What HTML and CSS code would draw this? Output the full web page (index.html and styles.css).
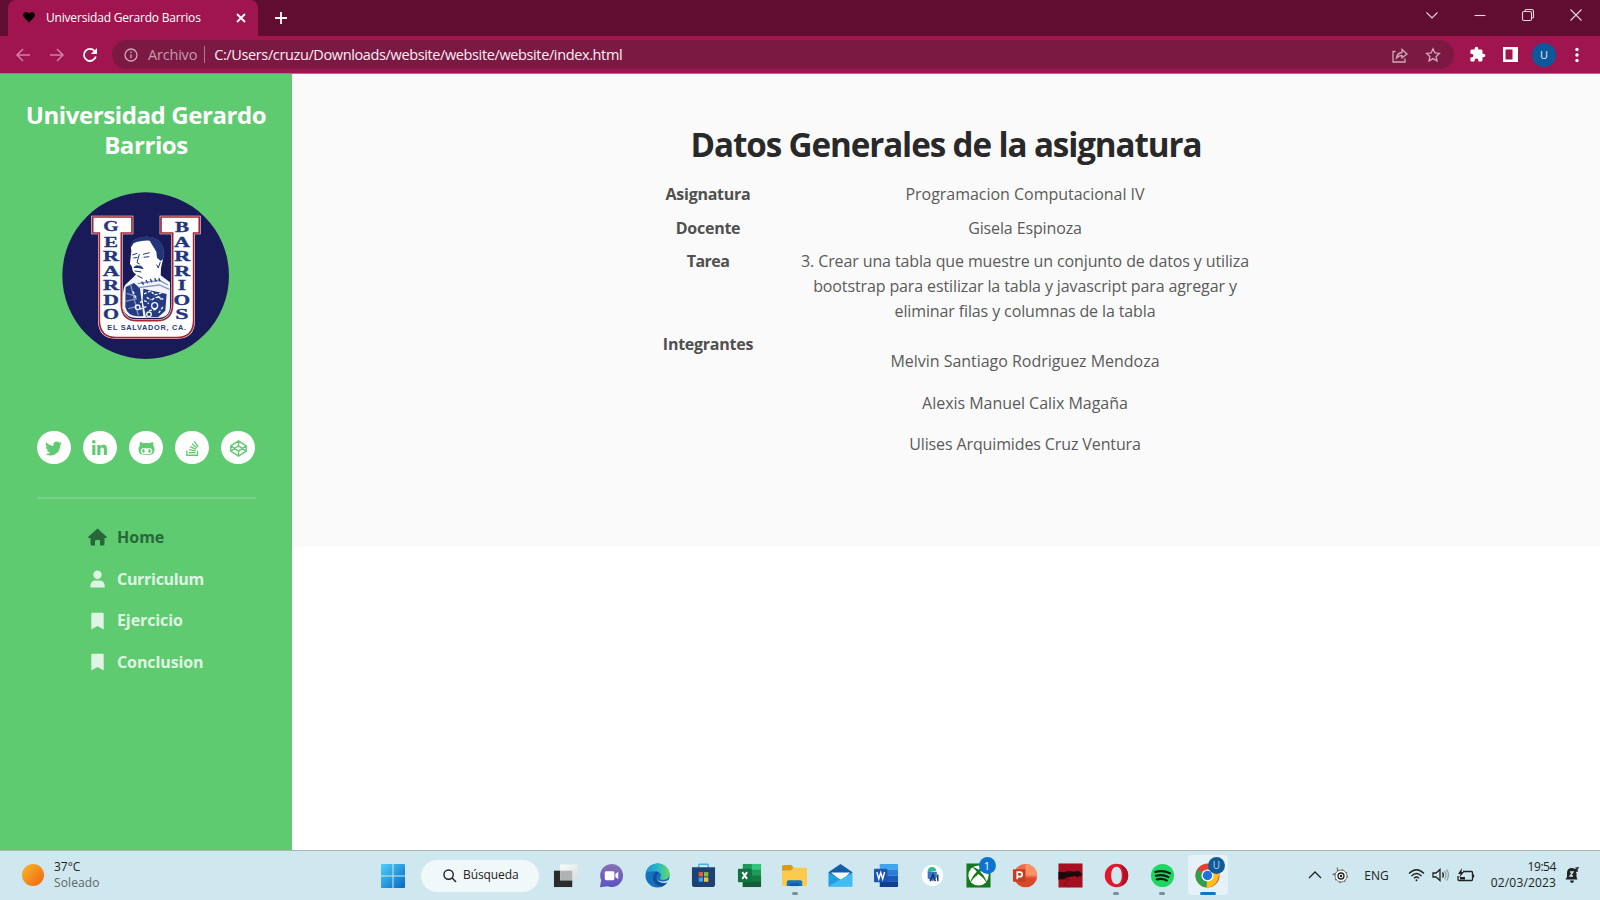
FILE: index.html
```html
<!DOCTYPE html>
<html lang="es">
<head>
<meta charset="utf-8">
<title>Universidad Gerardo Barrios</title>
<link rel="stylesheet" href="styles.css">
</head>
<body>
<div class="screen">
  <header class="browser">
    <div class="tabstrip">
      <div class="tab">
        <svg class="heart" viewBox="0 0 12 12"><path d="M6 11.600 1 6.200C-.6 4.200.4.9 3 .9c1.400 0 2.400.7 3 1.900C6.600 1.600 7.600.9 9 .9c2.600 0 3.600 3.300 2 5.300z"/></svg>
        <span class="tab-title">Universidad Gerardo Barrios</span>
        <svg class="tab-x" viewBox="0 0 10 10"><path d="M1 1l8 8M9 1l-8 8"/></svg>
      </div>
      <svg class="newtab" viewBox="0 0 14 14"><path d="M7 1v12M1 7h12"/></svg>
      <div class="winbtns">
        <svg viewBox="0 0 14 14"><path d="M1.500 4.500 7 10l5.500-5.500"/></svg>
        <svg viewBox="0 0 14 14"><path d="M1.500 7.500h11"/></svg>
        <svg viewBox="0 0 14 14"><rect x="1.500" y="3.500" width="9" height="9" rx="1.500"/><path d="M4 3.500V2.800Q4 1.500 5.300 1.500H10.500Q12.500 1.500 12.500 3.500V8.700Q12.500 10 11 10"/></svg>
        <svg viewBox="0 0 14 14"><path d="M1.500 1.500l11 11M12.500 1.500l-11 11"/></svg>
      </div>
    </div>
    <div class="toolbar">
      <svg class="nav-ic dim" viewBox="0 0 16 16"><path d="M15 8H2M8 2 2 8l6 6"/></svg>
      <svg class="nav-ic dim" viewBox="0 0 16 16"><path d="M1 8h13M8 2l6 6-6 6"/></svg>
      <svg class="nav-ic reload" viewBox="0 0 16 16"><path d="M13.800 9.500A6 6 0 1 1 12.500 4"/><path class="fill" d="M15 1v6H9z"/></svg>
      <div class="omnibox">
        <svg class="info" viewBox="0 0 14 14"><circle cx="7" cy="7" r="6"/><path d="M7 6.300v4M7 3.500v1.500"/></svg>
        <span class="scheme">Archivo</span>
        <i class="bar"></i>
        <span class="url">C:/Users/cruzu/Downloads/website/website/website/index.html</span>
        <svg class="share" viewBox="0 0 16 16"><path d="M3.500 4.500H1V15h12v-3.500M4.500 11Q5 6 10 5.500V2.500L15 7l-5 4V8.500Q6.500 8.500 4.500 11z"/></svg>
        <svg class="star" viewBox="0 0 16 16"><path d="M8 1.800l1.900 4.100 4.500.5-3.300 3 .9 4.500L8 11.600l-4 2.300.9-4.500-3.300-3 4.500-.5z"/></svg>
      </div>
      <svg class="puzzle" viewBox="0 0 24 24"><path d="M20.500 11H19V7a2 2 0 0 0-2-2h-4V3.500a2.500 2.500 0 0 0-5 0V5H4a2 2 0 0 0-2 2v3.800h1.500a2.700 2.700 0 0 1 0 5.400H2V20c0 1.100.9 2 2 2h3.800v-1.500a2.700 2.700 0 0 1 5.400 0V22H17a2 2 0 0 0 2-2v-4h1.500a2.500 2.500 0 0 0 0-5z"/></svg>
      <svg class="panel" viewBox="0 0 15 15"><path d="M0 0h15v15H0zM2.500 2.500v10h7v-10z" fill-rule="evenodd"/></svg>
      <span class="avatar">U</span>
      <svg class="dots" viewBox="0 0 4 16"><circle cx="2" cy="2.500" r="1.700"/><circle cx="2" cy="8" r="1.700"/><circle cx="2" cy="13.500" r="1.700"/></svg>
    </div>
  </header>

  <div class="page">
    <aside class="sidebar">
      <h1 class="brand"><span>Universidad Gerardo</span><span>Barrios</span></h1>
      <svg class="crest" viewBox="36 35 502 502">
        <circle cx="287" cy="286" r="250" fill="#191b59"/>
        <path d="M124 106H250V162H218V370Q218 417 262 417H320Q364 417 364 370V162H329V106H452V162H435V420Q435 476 380 476H200Q144 476 144 420V162H124Z" fill="#fff"/>
        <path d="M128 110H246V158H214V370Q214 421 262 421H320Q368 421 368 370V158H333V110H448V158H431V420Q431 472 380 472H200Q148 472 148 420V158H128Z" fill="#fff" stroke="#a4242f" stroke-width="5"/>
        <g class="portrait">
          <path d="M219 386Q216 325 226 313L250 291 264 275 332 285 360 306V380Q358 413 322 413H262Q228 413 219 386Z" fill="#f3f5fb"/>
          <path d="M244 211Q239 188 257 177Q285 163 318 175Q346 190 340 233L333 263 332 290Q300 309 264 300L260 282Q247 279 246 260L240 250Z" fill="#fff"/>
          <path d="M240 205Q240 183 262 173Q290 163 319 174Q346 190 341 235L332 242 321 232 319 214 310 199 299 181Q270 180 251 189Z" fill="#223579"/>
          <path d="M247 224l15-5M279 222l20-5M250 233l12-2M281 231l17-2M268 222l-7 25 8 4M254 272l20 3M262 286l16 8M331 245l-6 18-5-10" fill="none" stroke="#223579" stroke-width="3"/>
          <path d="M250 263Q257 251 266 256 276 255 281 267L265 263Z" fill="#223579"/>
          <path d="M227 320l25-12 18 16 10 84h-18Q232 406 226 380ZM280 325l70 16-4 50-22 20h-36l-10-50Z" fill="#243b83"/>
          <path d="M263 310l65-10 26 14M266 322l62-8 30 13M242 313l23 92M230 339l30 10M226 363l35-8M235 385l25-6" fill="none" stroke="#8796c2" stroke-width="4"/>
          <path d="M275 304l6 9M288 299l5 10M301 296l5 10M314 294l5 10M327 294l3 9" stroke="#243b83" stroke-width="4"/>
          <g fill="none" stroke="#f3f5fb" stroke-width="4"><path d="M282 341l20-9 12 12 21-6M270 367q17-12 26 4M306 359q14-15 28-1M269 387l20-8M297 391l22-4M326 398l15-21M249 333l8 20M290 351l14 8M323 348l17 9" stroke-dasharray="9 4"/><circle cx="314" cy="376" r="9"/><circle cx="263" cy="381" r="7"/><circle cx="297" cy="402" r="7"/></g>
        </g>
        <g class="crest-letters">
          <text x="183" y="153" textLength="46" lengthAdjust="spacingAndGlyphs">G</text><text x="183" y="200" textLength="42" lengthAdjust="spacingAndGlyphs">E</text><text x="183" y="243" textLength="48" lengthAdjust="spacingAndGlyphs">R</text><text x="183" y="287" textLength="50" lengthAdjust="spacingAndGlyphs">A</text><text x="183" y="330" textLength="48" lengthAdjust="spacingAndGlyphs">R</text><text x="183" y="373" textLength="47" lengthAdjust="spacingAndGlyphs">D</text><text x="183" y="416" textLength="48" lengthAdjust="spacingAndGlyphs">O</text>
          <text x="396" y="155" textLength="42" lengthAdjust="spacingAndGlyphs">B</text><text x="396" y="199" textLength="48" lengthAdjust="spacingAndGlyphs">A</text><text x="397" y="243" textLength="48" lengthAdjust="spacingAndGlyphs">R</text><text x="397" y="287" textLength="48" lengthAdjust="spacingAndGlyphs">R</text><text x="396" y="330" textLength="25" lengthAdjust="spacingAndGlyphs">I</text><text x="396" y="373" textLength="50" lengthAdjust="spacingAndGlyphs">O</text><text x="396" y="415" textLength="40" lengthAdjust="spacingAndGlyphs">S</text>
        </g>
        <text class="crest-place" x="290" y="450" textLength="236">EL SALVADOR, CA.</text>
      </svg>
      <ul class="social">
        <li><svg viewBox="0 0 512 512"><path d="M459.370 151.716c.325 4.548.325 9.097.325 13.645 0 138.720-105.583 298.558-298.558 298.558-59.452 0-114.680-17.219-161.137-47.106 8.447.974 16.568 1.299 25.340 1.299 49.055 0 94.213-16.568 130.274-44.832-46.132-.975-84.792-31.188-98.112-72.772 6.498.974 12.995 1.624 19.818 1.624 9.421 0 18.843-1.300 27.614-3.573-48.081-9.747-84.143-51.980-84.143-102.985v-1.299c13.969 7.797 30.214 12.670 47.431 13.319-28.264-18.843-46.781-51.005-46.781-87.391 0-19.492 5.197-37.360 14.294-52.954 51.655 63.675 129.300 105.258 216.365 109.807-1.624-7.797-2.599-15.918-2.599-24.040 0-57.828 46.782-104.934 104.934-104.934 30.213 0 57.502 12.670 76.670 33.137 23.715-4.548 46.456-13.320 66.599-25.340-7.798 24.366-24.366 44.833-46.132 57.827 21.117-2.273 41.584-8.122 60.426-16.243-14.292 20.791-32.161 39.308-52.628 54.253z"/></svg></li>
        <li><svg viewBox="-32 0 512 512"><path d="M100.280 448H7.400V148.900h92.880zM53.790 108.100C24.090 108.100 0 83.500 0 53.800a53.790 53.790 0 0 1 107.580 0c0 29.700-24.100 54.300-53.790 54.300zM447.900 448h-92.680V302.400c0-34.700-.7-79.200-48.290-79.200-48.290 0-55.690 37.700-55.690 76.700V448h-92.780V148.900h89.080v40.800h1.300c12.400-23.500 42.690-48.300 87.880-48.300 94 0 111.280 61.900 111.280 142.300V448z"/></svg></li>
        <li><svg viewBox="-16 0 512 512"><path d="M186.100 328.700c0 20.900-10.900 55.100-36.700 55.100s-36.700-34.200-36.700-55.100 10.900-55.100 36.700-55.100 36.700 34.200 36.700 55.100zM480 278.200c0 31.900-3.200 65.700-17.500 95-37.900 76.600-142.100 74.800-216.700 74.800-75.800 0-186.200 2.700-225.600-74.800-14.600-29-20.200-63.100-20.200-95 0-41.900 13.900-81.500 41.500-113.600-5.200-15.800-7.700-32.400-7.700-48.800 0-21.500 4.900-32.300 14.600-51.800 45.300 0 74.300 9 108.800 36 29-6.900 58.800-10 88.700-10 27 0 54.200 2.900 80.400 9.200 34-26.700 63-35.200 107.800-35.200 9.800 19.500 14.600 30.300 14.600 51.800 0 16.400-2.600 32.700-7.700 48.200 27.500 32.400 39 72.300 39 114.200zm-64.300 50.500c0-43.900-26.700-82.600-73.500-82.600-18.900 0-37 3.400-56 6-14.900 2.300-29.800 3.200-45.100 3.200-15.200 0-30.100-.9-45.100-3.200-18.700-2.600-37-6-56-6-46.800 0-73.500 38.700-73.500 82.600 0 87.800 80.400 101.300 150.400 101.300h48.200c70.300 0 150.600-13.400 150.600-101.300zm-82.600-55.100c-25.800 0-36.700 34.200-36.700 55.100s10.900 55.100 36.700 55.100 36.700-34.200 36.700-55.100-10.900-55.100-36.700-55.100z"/></svg></li>
        <li><svg viewBox="-64 0 512 512"><path d="M290.700 311L95 269.700 86.800 309l195.700 41zm51-87L188.200 95.700l-25.500 30.800 153.500 128.300zm-31.200 39.700L129.200 179l-16.700 36.500L293.700 300zM262 32l-32 24 119.300 160.300 32-24zm20.500 328h-200v39.700h200zm39.700 80H42.700V320h-40v160h359.500V320h-40z"/></svg></li>
        <li><svg class="line" viewBox="0 0 512 512"><path d="M256 24 488 178V334L256 488 24 334V178ZM24 178 256 334 488 178M24 334 256 178 488 334M256 24V178M256 334V488"/></svg></li>
      </ul>
      <hr class="rule">
      <nav class="menu">
        <a class="on"><svg viewBox="0 0 19 18"><path d="M9.500.5 18.700 8.800a.7.700 0 0 1-.5 1.200H16.500V16a1.600 1.600 0 0 1-1.600 1.600H12V13q0-1-1-1H8q-1 0-1 1V17.600H4.100A1.600 1.600 0 0 1 2.500 16V10H.8A.7.700 0 0 1 .3 8.800Z"/></svg><span>Home</span></a>
        <a><svg viewBox="0 0 19 18"><circle cx="9.500" cy="4.800" r="4.200"/><path d="M2.300 17.500v-1.300q0-5.700 5.700-5.700h3q5.700 0 5.700 5.700v1.300z"/></svg><span class="snug">Curriculum</span></a>
        <a><svg viewBox="0 0 19 18"><path d="M3.300 17.500V2Q3.300.8 4.500.8h10Q15.700.8 15.700 2v15.500L9.500 14z"/></svg><span>Ejercicio</span></a>
        <a><svg viewBox="0 0 19 18"><path d="M3.300 17.500V2Q3.300.8 4.500.8h10Q15.700.8 15.700 2v15.500L9.500 14z"/></svg><span>Conclusion</span></a>
      </nav>
    </aside>
    <main class="content">
      <section class="hero">
        <h2 class="title">Datos Generales de la asignatura</h2>
        <dl class="facts">
          <dt>Asignatura</dt><dd class="wide">Programacion Computacional IV</dd>
          <dt>Docente</dt><dd>Gisela Espinoza</dd>
          <dt class="tight">Tarea</dt><dd><span>3. Crear una tabla que muestre un conjunto de datos y utiliza</span><br><span>bootstrap para estilizar la tabla y javascript para agregar y</span><br><span>eliminar filas y columnas de la tabla</span></dd>
          <dt>Integrantes</dt><dd class="people"><p class="wide">Melvin Santiago Rodriguez Mendoza</p><p class="wide">Alexis Manuel Calix Magaña</p><p>Ulises Arquimides Cruz Ventura</p></dd>
        </dl>
      </section>
    </main>
  </div>

  <footer class="taskbar">
    <div class="weather">
      <i class="sun"></i>
      <div><span>37°C</span><br><span class="soft">Soleado</span></div>
    </div>
    <div class="apps">
      <svg class="start" viewBox="0 0 24 24"><defs><linearGradient id="win" x1="0" y1="0" x2="1" y2="1"><stop offset="0" stop-color="#4fd0fb"/><stop offset="1" stop-color="#0668c4"/></linearGradient></defs><path fill="url(#win)" d="M0 1Q0 0 1 0H11.500V11.500H0ZM12.500 0H23Q24 0 24 1V11.500H12.500ZM0 12.500H11.500V24H1Q0 24 0 23ZM12.500 12.500H24V23Q24 24 23 24H12.500Z"/></svg>
      <div class="search"><svg viewBox="0 0 15 15"><circle cx="6" cy="6" r="5"/><path d="M9.700 9.700l4.300 4.300"/></svg><span>Búsqueda</span></div>
      <div class="cell"><svg viewBox="0 0 26 26"><defs><linearGradient id="tv" x1="0" y1="0" x2="1" y2="1"><stop offset="0" stop-color="#fbfbfb"/><stop offset="1" stop-color="#d9dcdd"/></linearGradient></defs><path d="M1 8h19v17H1z" fill="#2b2b2b"/><path d="M7.500 1.500H26V18H7.500z" fill="url(#tv)"/><path d="M7.500 8H20v10H7.500z" fill="#b0b3b4"/></svg></div>
      <div class="cell"><svg viewBox="0 0 26 26"><defs><linearGradient id="chat" x1="0" y1="0" x2="0" y2="1"><stop offset="0" stop-color="#8a70b4"/><stop offset="1" stop-color="#5a52c4"/></linearGradient></defs><path d="M13 1a12 12 0 1 1-4 23.300L1 25.300 2.300 18A12 12 0 0 1 13 1z" fill="url(#chat)"/><rect x="6" y="8.500" width="10" height="9.500" rx="1.500" fill="#fff"/><path d="M17 11.500l3-2.500v8l-3-2.500z" fill="#fff"/></svg></div>
      <div class="cell"><svg viewBox="0 0 26 26"><defs><linearGradient id="e1" x1="0" y1="0" x2="1" y2="0"><stop offset="0" stop-color="#1d8fd6"/><stop offset=".55" stop-color="#2bbcc6"/><stop offset="1" stop-color="#68dd55"/></linearGradient></defs><circle cx="13" cy="13" r="12.500" fill="#1570bd"/><path d="M.7 11C2 4 7.500.5 13 .5c7 0 12.500 5 12.500 10.500 0 5-4 7-8 6.500-2-.3-2.500-1.500-1.500-2.500 2-2.500 0-6-5-6.500C6.500 8.300 2 9 .7 11z" fill="url(#e1)"/><path d="M13 9C7 9 6.500 19 13 23.500 18 26 22 22 23.500 19.500c-4 2-10.500 1-11-4.500 0-3 2-4 1-6z" fill="#0f4f9c"/><path d="M13 11.500c-2 2-1.500 6.500 3 7.500 3 .8 6 .3 9-1.500l-1 2.500c-3 1.500-9 1-11.300-2.500-1.500-2.500-1-5 .3-6z" fill="#d5eaef"/></svg></div>
      <div class="cell"><svg viewBox="0 0 26 26"><path d="M8 5V2.500Q8 1.200 9.300 1.200h7.400Q18 1.200 18 2.500V5" fill="none" stroke="#3cb4e8" stroke-width="1.500"/><path d="M1 4.500h24V22q0 3-3 3H4q-3 0-3-3z" fill="#1c4173"/><path d="M8 9.500h4.500V14H8z" fill="#ef5a3a"/><path d="M13.500 9.500H18V14h-4.500z" fill="#84bd3c"/><path d="M8 15h4.500v4.500H8z" fill="#33a7e5"/><path d="M13.500 15H18v4.500h-4.500z" fill="#fbc02c"/></svg></div>
      <div class="cell"><svg viewBox="0 0 26 26"><path d="M6 1h19v24H6z" fill="#1e9b58"/><path d="M15.500 1H24q1 0 1 1v5h-9.500z" fill="#32c47f"/><path d="M6 7h9.500v6H6z" fill="#127a43"/><path d="M6 13h19v6H6z" fill="#137d45"/><path d="M6 19h19v5q0 1-1 1H6z" fill="#155c37"/><rect x="1" y="6" width="14" height="14" rx="1" fill="#117340"/><path d="M5.500 9.500l5 7M10.500 9.500l-5 7" stroke="#fff" stroke-width="2"/></svg></div>
      <div class="cell run"><svg viewBox="0 0 26 26"><path d="M0 4Q0 2 2 2h8l2 3-2 3H0z" fill="#d69a16"/><path d="M0 8h9l3-3h13q1 0 1 1v17q0 1-1 1H1q-1 0-1-1z" fill="#fccb4d"/><path d="M5 24v-4q0-2 2-2h12q2 0 2 2v4z" fill="#1773c0"/><path d="M8 21h10v3H8z" fill="#145c9e"/></svg></div>
      <div class="cell"><svg viewBox="0 0 26 26"><path d="M.5 9.500 13 1l12.500 8.500-5 8h-15z" fill="#145ea8"/><path d="M3 10h20L14 19z" fill="#f5fafc"/><path d="M.5 9.800 25.500 24.500H.5z" fill="#1f9fe5"/><path d="M25.500 9.800V24.500H.5z" fill="#42bdf2"/></svg></div>
      <div class="cell"><svg viewBox="0 0 26 26"><path d="M6 1h18q1 0 1 1v5H6z" fill="#41a5ee"/><path d="M6 7h19v6H6z" fill="#2b7cd3"/><path d="M6 13h19v6H6z" fill="#185abd"/><path d="M6 19h19v5q0 1-1 1H6z" fill="#103f91"/><rect x="0" y="6" width="14" height="14" rx="1" fill="#1b55b5"/><path d="M3 9.500l2 7 2-6.500 2 6.500 2-7" fill="none" stroke="#fff" stroke-width="1.500"/></svg></div>
      <div class="cell"><svg viewBox="0 0 26 26"><circle cx="13" cy="13" r="11.200" fill="#fbfdfd"/><path d="M8 9.500a4.500 4.500 0 0 1 9-1.500z" fill="#33b88b"/><path d="M8 9h9.500v6l-4 4-5.500-3z" fill="#3b73d1"/><path d="M10.500 19l3-7 2.500 7M18.500 12v7" fill="none" stroke="#17365c" stroke-width="1.500"/></svg></div>
      <div class="cell"><svg viewBox="0 0 26 26"><path d="M.5.5h25v25H.5z" fill="#15791b"/><circle cx="13" cy="13" r="10.500" fill="#fff"/><path d="M6 4.500Q9 4 13 7q4-3 7-2.500Q16 6.500 14.800 9q6 6 6.700 11.500Q18 15 13 11.500 8 15 4.500 20.500 5.200 15 11.200 9 10 6.500 6 4.500z" fill="#15791b"/></svg><b class="badge">1</b></div>
      <div class="cell"><svg viewBox="0 0 26 26"><circle cx="14" cy="13" r="12" fill="#ee6c47"/><path d="M14 1a12 12 0 0 1 12 12H14z" fill="#ff9068"/><path d="M2.300 15H26a12 12 0 0 1-23.700 0z" fill="#d9482a"/><rect x="1" y="6.500" width="13" height="13" rx="1" fill="#c2401f"/><path d="M5.500 17V9.500h2.700a2.300 2.300 0 0 1 0 4.700H5.500" fill="none" stroke="#fff" stroke-width="1.800"/></svg></div>
      <div class="cell"><svg viewBox="0 0 26 26"><path d="M.5.500h25v25H.5z" fill="#a80f20"/><path d="M.5 9l6 .5 4-1.500 6 1 5-1 4 4-2 .5 1 2-3.500-1.500.5 2.500-4-2-3 .5-5 1-4 2-5 .5z" fill="#1f070c"/><path d="M1 17h11l-6 5 6 3" stroke="#7a0c19" fill="none"/></svg></div>
      <div class="cell run"><svg viewBox="0 0 26 26"><path fill-rule="evenodd" fill="#e2182d" d="M13 .8a12.200 12.200 0 1 1 0 24.400A12.200 12.200 0 0 1 13 .8zM13 4c-3.700 0-5.500 4-5.500 9s1.800 9 5.500 9 5.500-4 5.500-9S16.700 4 13 4z"/><path d="M16 1.200Q25 4 25.200 13T16 24.800Q20 22 20 13T16 1.200z" fill="#b01224"/></svg></div>
      <div class="cell run"><svg viewBox="0 0 26 26"><circle cx="13" cy="13" r="12" fill="#1ed760"/><path d="M5.500 9.300q8-2.200 15.500 1.500M6.200 13.300q7-1.900 13 1.400M7 17q6-1.400 10.500 1.200" fill="none" stroke="#0c1a10" stroke-width="2.200" stroke-linecap="round"/></svg></div>
      <div class="cell active"><svg viewBox="0 0 26 26"><circle cx="13" cy="13" r="12.500" fill="#e34133"/><path d="M13 13 2.200 6.800A12.500 12.500 0 0 0 12 25.500z" fill="#2da04e"/><path d="M13 13h11.500a12.500 12.500 0 0 1-12.500 12.500z" fill="#fbc116"/><path d="M13 7.500h11.300a12.500 12.500 0 0 1 1 5.500L19 18z" fill="#fbc116"/><circle cx="13" cy="13" r="6.300" fill="#fff"/><circle cx="13" cy="13" r="4.900" fill="#1f70e0"/></svg><b class="badge u">U</b></div>
    </div>
    <div class="tray">
      <svg class="t-up" viewBox="0 0 14 8"><path d="M1 7l6-6 6 6"/></svg>
      <svg class="t-gear" viewBox="0 0 16 16"><circle class="halo" cx="9" cy="9" r="6"/><circle class="teeth" cx="9" cy="9" r="6.500"/><circle cx="9" cy="9" r="3"/><circle class="fill" cx="9" cy="9" r="1.200"/><path class="thin" d="M.5 7.500l3-1M5 .5l1 3"/></svg>
      <span class="lang">ENG</span>
      <svg class="t-wifi" viewBox="0 0 17 14"><path d="M1 5.500q7.500-7.500 15 0M3.500 8q5-5 10 0M6 10.300q2.500-2.500 5 0"/><circle class="fill" cx="8.500" cy="12.300" r="1"/></svg>
      <svg class="t-vol" viewBox="0 0 17 14"><path d="M1 5h3l4-3.500v11L4 9H1z"/><path d="M10.500 4.500q1.800 2.500 0 5"/><path opacity=".35" d="M12.500 3q3 4 0 8M14.500 1.500q4 5.500 0 11"/></svg>
      <svg class="t-bat" viewBox="0 0 18 14"><path d="M6 3.500h8.500q1 0 1 1v7q0 1-1 1H2q-1 0-1-1V8M16.500 6.500v3"/><path class="fill" d="M5 0 1 6h2.500L2 10l5-6H4.500zM3 9h5v2.500H3z"/></svg>
      <div class="clock"><span class="time">19:54</span><br><span class="date">02/03/2023</span></div>
      <svg class="t-bell" viewBox="0 0 14 16"><path class="fill" d="M7 1Q2 1 2 6v4L.5 12.500h12L11.500 10V6M5 13.500h4Q8.500 16 7 16T5 13.500z"/><path class="fill" d="M7 1l4 1v8H3z"/><path class="z" d="M5 5h3L5 9h3"/><path d="M10.500.8H13L10.500 4H13"/></svg>
    </div>
  </footer>
</div>
</body>
</html>
```
FILE: styles.css
```css
* { box-sizing: border-box; }
body { margin: 0; background: #fff; font-family: "Open Sans", "Noto Sans", sans-serif; }
h1, h2, p, ul, dl, dd { margin: 0; padding: 0; }
svg { display: block; flex: none; overflow: visible; }
span { white-space: nowrap; }
.screen { width: 1600px; height: 900px; display: flex; flex-direction: column; overflow: hidden; }

/* Browser frame */
.browser { height: 74px; flex: none; background: #a01550; border-bottom: 1px solid #c4648f; color: #fff; }
.tabstrip { height: 36px; background: #610d31; display: flex; align-items: center; padding-left: 8px; }
.tab { width: 250px; height: 36px; background: #a01550; border-radius: 8px 8px 0 0; display: flex; align-items: center; padding: 0 12px 0 15px; }
.heart { width: 12px; height: 12px; margin-top: -2px; }
.tab-title { font-size: 12px; line-height: 16px; letter-spacing: -.19px; margin: -1px auto 0 11px; }
.tab-x { width: 10px; height: 10px; }
.tab-x path, .newtab path { stroke: #fff; stroke-width: 1.8; fill: none; }
.newtab { width: 14px; height: 14px; margin-left: 16px; }
.winbtns { margin-left: auto; display: flex; gap: 34px; padding: 0 17px 6px 0; }
.winbtns svg { width: 14px; height: 14px; fill: none; stroke: #e8d6df; stroke-width: 1.1; }
.toolbar { height: 37px; display: flex; align-items: center; padding: 0 20px 0 15px; }
.nav-ic { width: 16px; height: 16px; margin-right: 17.500px; fill: none; stroke: #fff; stroke-width: 1.8; }
.nav-ic.dim { stroke: #cf7fa3; stroke-width: 1.5; }
.nav-ic .fill { fill: #fff; stroke: none; }
.nav-ic.reload { margin-right: 14px; }
.omnibox { width: 1342px; height: 29px; border-radius: 15px; background: #7b1943; display: flex; align-items: center; padding: 0 13px 0 12px; font-size: 14.500px; line-height: 20px; }
.info { width: 14px; height: 14px; fill: none; stroke: #d0a8ba; stroke-width: 1.3; }
.scheme { color: #c39aac; margin-left: 10px; letter-spacing: -.2px; }
.bar { width: 1px; height: 17px; background: #b07891; margin: 0 9.500px 0 6.500px; }
.url { color: #fbeef4; margin-right: auto; letter-spacing: -.375px; }
.share, .star { width: 16px; height: 16px; fill: none; stroke: #d0a8ba; stroke-width: 1.3; }
.star { margin-left: 17px; }
.puzzle { width: 17px; height: 17px; margin-left: 15px; fill: #fff; }
.panel { width: 15px; height: 15px; margin-left: 17px; fill: #fff; }
.avatar { width: 24px; height: 24px; border-radius: 50%; background: #0d579b; margin-left: 14px; font-size: 11px; line-height: 24px; text-align: center; color: #e6f0f8; }
.dots { width: 4px; height: 16px; margin-left: 19px; fill: #fff; }

/* Page */
.page { flex: 1; display: flex; min-height: 0; }
.sidebar { width: 292px; flex: none; background: #5fcb71; padding-top: 25.500px; display: flex; flex-direction: column; align-items: center; }
.brand { font-size: 24px; line-height: 30px; letter-spacing: -.4px; font-weight: 700; color: #fff; display: flex; flex-direction: column; align-items: center; }
.crest { width: 167.300px; height: 167.300px; margin-top: 32px; }
.crest-letters { font: 700 46px "Liberation Serif", serif; fill: #24357c; stroke: #24357c; stroke-width: 1px; text-anchor: middle; }
.crest-place { font: 700 22px "Liberation Sans", sans-serif; fill: #2b3a78; text-anchor: middle; }
.social { list-style: none; display: flex; gap: 12.500px; margin-top: 72px; }
.social li { width: 33.600px; height: 33.600px; border-radius: 50%; background: #fff; display: grid; place-items: center; padding-top: 2px; }
.social svg { width: 17px; height: 17px; fill: #5fcb71; }
.social .line { fill: none; stroke: #5fcb71; stroke-width: 42; stroke-linejoin: round; }
.rule { width: 219px; height: 2px; border: 0; background: #77d387; margin: 32.500px 0 0; }
.menu { width: 116px; display: flex; flex-direction: column; gap: 16.700px; margin-top: 26px; }
.menu a { height: 25px; display: flex; align-items: center; gap: 10px; font-size: 16px; line-height: 25px; letter-spacing: -.1px; font-weight: 700; color: #dff5e3; }
.menu .snug { letter-spacing: -.3px; }
.menu svg { width: 19px; height: 18px; fill: currentColor; }
.menu .on { color: #28673a; letter-spacing: 0; }
.content { flex: 1; background: #fff; }
.hero { height: 473px; background: #fafafa; padding-top: 50px; }
.title { font-size: 33.200px; line-height: 42px; letter-spacing: -1.110px; text-align: center; color: #292929; }
.facts { display: grid; grid-template-columns: 168px 466px; margin: 12.200px 0 0 332px; font-size: 16px; line-height: 25px; letter-spacing: -.12px; color: #5a5a5a; text-align: center; }
.facts dt, .facts dd { padding: 4.170px 0; }
.facts dt { font-weight: 700; letter-spacing: -.25px; color: #505050; }
.facts .tight { letter-spacing: -.55px; }
.facts .wide { letter-spacing: -.03px; }
.people p { margin-top: 16.670px; }

/* Taskbar */
.taskbar { height: 50px; flex: none; background: #cfe7ee; border-top: 1px solid #a9b5b9; display: flex; align-items: center; color: #222; font-size: 12px; line-height: 16.500px; }
.weather { width: 370px; display: flex; align-items: center; gap: 10px; padding: 0 0 1px 22px; }
.sun { width: 22px; height: 22px; border-radius: 50%; background: linear-gradient(135deg, #f6b226 10%, #f26a12 90%); }
.soft { color: #5b6669; letter-spacing: .12px; }
.apps { display: flex; align-items: center; padding-left: 11px; }
.start { width: 24px; height: 24px; }
.search { width: 118px; height: 32px; border-radius: 16px; background: #f0f8fa; margin: 0 3.500px 0 16px; padding-left: 22px; display: flex; align-items: center; gap: 6px; }
.search span { letter-spacing: -.1px; }
.search svg { width: 14px; height: 14px; fill: none; stroke: #222; stroke-width: 1.5; }
.cell { width: 45.900px; height: 49px; padding-bottom: 1px; position: relative; display: grid; place-items: center; }
.cell svg { width: 25px; height: 25px; z-index: 1; }
.run::after { content: ""; position: absolute; left: 20px; bottom: 5px; width: 6px; height: 3px; border-radius: 2px; background: #7f8c90; }
.active::before { content: ""; position: absolute; left: 3px; top: 4px; width: 40px; height: 40px; border-radius: 4px; background: #e6f2f7; }
.active::after { content: ""; position: absolute; left: 15px; bottom: 5px; width: 16px; height: 3px; border-radius: 2px; background: #1674c4; }
.badge { position: absolute; z-index: 2; left: 23px; top: 6px; width: 17px; height: 17px; border-radius: 50%; background: #0c74cf; color: #fff; font-size: 11px; font-weight: 400; line-height: 17px; text-align: center; }
.badge.u { background: #125a9a; color: #b9d7ee; font-size: 10px; }
.tray { flex: 1; display: flex; align-items: center; padding-bottom: 1px; }
.tray svg { fill: none; stroke: #222; stroke-width: 1.3; }
.tray .fill { fill: #222; stroke: none; }
.tray .halo { fill: #f4f8f9; stroke: #555; stroke-width: .8; }
.tray .teeth { stroke: #777; stroke-dasharray: 1.5 3.6; }
.tray .thin { stroke: #555; stroke-width: 1; }
.t-up { width: 14px; height: 8px; margin-left: 77.500px; }
.t-gear { width: 16px; height: 16px; margin-left: 10px; }
.lang { margin: 2px 0 0 16px; }
.t-wifi { width: 17px; height: 14px; margin-left: 19px; }
.t-vol { width: 17px; height: 14px; margin-left: 7px; }
.t-bat { width: 18px; height: 14px; margin-left: 8px; }
.clock { margin-left: auto; text-align: right; }
.time { letter-spacing: -.42px; }
.date { letter-spacing: .15px; }
.t-bell { width: 14px; height: 16px; margin: 0 21px 0 9px; }
.tray .z { stroke: #cfe7ee; }
```
